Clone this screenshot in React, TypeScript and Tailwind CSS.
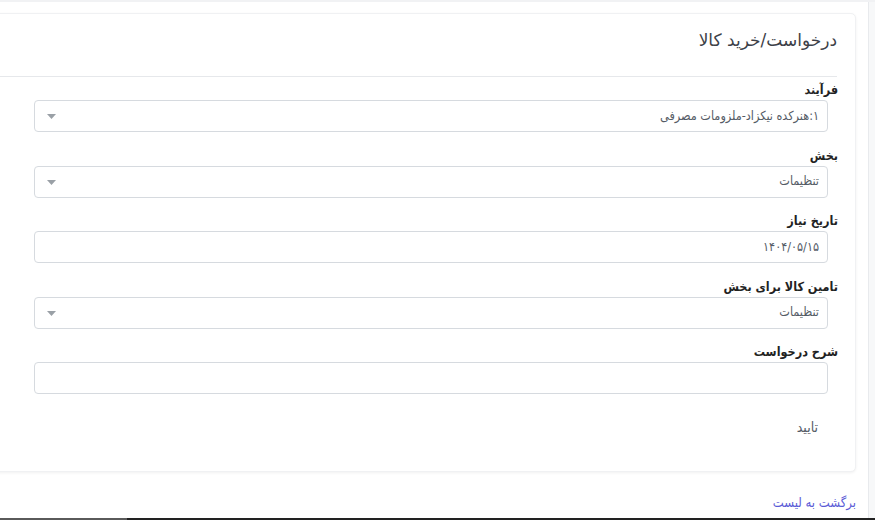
type Field = {
  label: string;
  value?: string;
  select?: boolean;
};

const fields: Field[] = [
  { label: "فرآیند", value: "۱:هنرکده نیکزاد-ملزومات مصرفی", select: true },
  { label: "بخش", value: "تنظیمات", select: true },
  { label: "تاریخ نیاز", value: "۱۴۰۴/۰۵/۱۵" },
  { label: "تامین کالا برای بخش", value: "تنظیمات", select: true },
  { label: "شرح درخواست" },
];

const condensed = { fontFamily: '"DejaVu Sans Condensed", "DejaVu Sans", sans-serif' };

function FormRow({ field }: { field: Field }) {
  return (
    <div className="mb-[12.5px]">
      <div className="h-[21px] text-[12.5px] leading-[21px] font-bold text-[#222]" style={condensed}>
        {field.label}
      </div>
      <div className="pr-[10px]">
        <div className="h-[32px] flex items-center justify-between border border-[#d6dadf] rounded-[4px] bg-white pr-[8px] pl-[12px]">
          <span className="text-[12.5px] text-[#555c66]" style={condensed}>
            {field.value}
          </span>
          {field.select && (
            <svg width="9" height="5" viewBox="0 0 9 5" className="mt-[1px]">
              <path d="M0 0 L9 0 L4.5 5 Z" fill="#9aa0a6" />
            </svg>
          )}
        </div>
      </div>
    </div>
  );
}

export default function App() {
  return (
    <div
      dir="rtl"
      className="h-[520px] w-full overflow-hidden bg-white flex flex-col"
      style={{ fontFamily: '"DejaVu Sans", sans-serif' }}
    >
      <div className="h-[2px] bg-[#f1f2f4]" />
      <div className="flex flex-1 min-h-0">
        {/* right strip */}
        <div className="w-[7px] bg-[#f7f8f9] border-l border-[#e8eaed]" />
        <div className="flex-1 pr-[12px] pt-[11px] overflow-hidden">
          <div className="ml-[-12px] bg-white rounded-[5px] border border-[#f0f1f3] shadow-[0_1px_3px_rgba(0,0,0,0.06)] h-[459px] flex flex-col">
            <div className="pr-[18px] pl-0">
              <div className="h-[63px] pt-[13px] text-[17px] leading-[27px] text-[#3d4148] border-b border-[#e6e8eb]">
                درخواست/خرید کالا
              </div>
            </div>
            <div className="pr-[17px] pl-[45px] pt-[2px]">
              {fields.map((f) => (
                <FormRow key={f.label} field={f} />
              ))}
              <div className="pr-[20px] pt-[6px]">
                <button className="text-[14px] text-[#555c66] py-[4px]" style={condensed}>
                  تایید
                </button>
              </div>
            </div>
          </div>
          <div className="pt-[21px] text-[13px] text-[#5b5bd6]" style={condensed}>
            برگشت به لیست
          </div>
        </div>
      </div>
      <div className="h-[2px] flex flex-row-reverse">
        <div className="w-[127px] bg-[#5a5a5a]" />
        <div className="flex-1 bg-[#222]" />
      </div>
    </div>
  );
}
